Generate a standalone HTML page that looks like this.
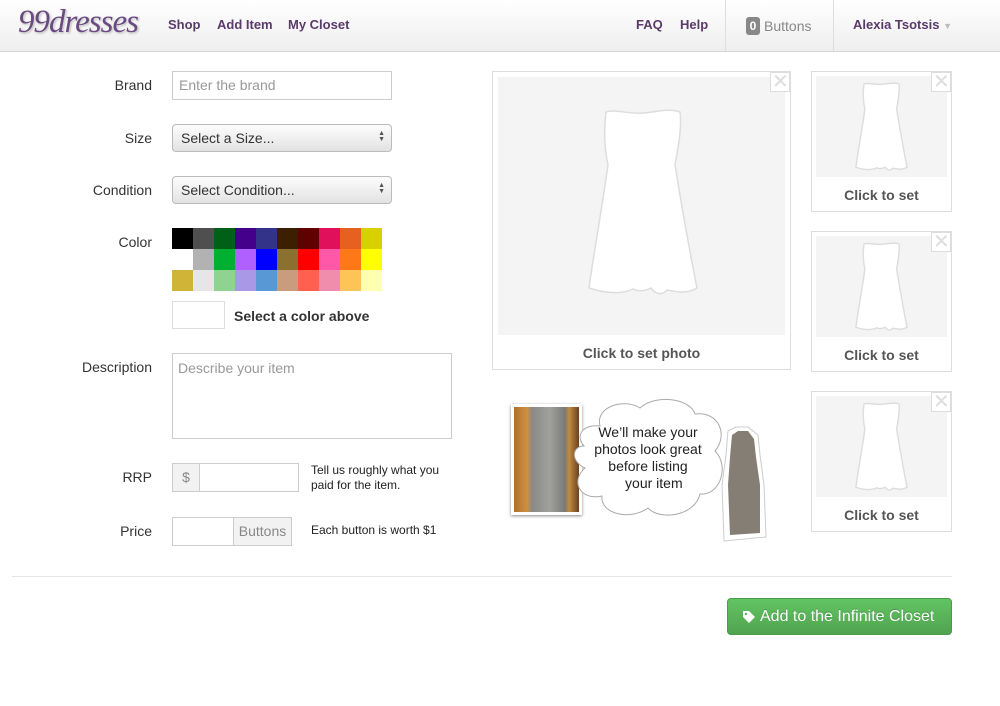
<!DOCTYPE html>
<html><head><meta charset="utf-8"><style>
*{box-sizing:border-box;margin:0;padding:0}
body{width:1000px;height:706px;background:#fff;font-family:"Liberation Sans",Arial,sans-serif;position:relative;overflow:hidden;color:#333}
.a{position:absolute}
.hdr{left:0;top:0;width:1000px;height:52px;background:linear-gradient(#fff,#eee);border-bottom:1px solid #d5d5d5}
.nav{font-size:13px;font-weight:bold;color:#5a3a6a;top:17px}
.lbl{font-size:14px;color:#333;width:152px;text-align:right;left:0}
.inp{border:1px solid #ccc;background:#fff}
.sel{border:1px solid #bbb;border-radius:4px;background:linear-gradient(#fdfdfd,#e2e2e2);font-size:14px;color:#333;padding:5px 8px}
.arr{position:absolute;right:6px;top:6px;font-size:7px;line-height:6px;color:#555}
.sw{width:21px;height:21px;position:absolute}
.box{border:1px solid #ddd;background:#fff}
.gray{background:#f4f4f4}
.cap{font-size:14px;font-weight:bold;color:#555;text-align:center}
.x{width:20px;height:20px;border:1px solid #ddd;background:#fff}
</style></head><body>
<div class="a hdr"></div>
<div class="a" style="left:18px;top:4px;font-family:'Liberation Serif',serif;font-style:italic;font-size:33px;color:#6a4a80;letter-spacing:-1px;text-shadow:0 0 3px #fff,1px 1px 2px #999">99dresses</div>
<div class="a nav" style="left:168px">Shop</div>
<div class="a nav" style="left:217px">Add Item</div>
<div class="a nav" style="left:288px">My Closet</div>
<div class="a nav" style="left:636px">FAQ</div>
<div class="a nav" style="left:680px">Help</div>
<div class="a" style="left:725px;top:0;width:1px;height:51px;background:#ddd"></div>
<div class="a" style="left:833px;top:0;width:1px;height:51px;background:#ddd"></div>
<div class="a" style="left:746px;top:17px;width:14px;height:18px;background:#888;border-radius:3px;color:#fff;font-size:12px;font-weight:bold;text-align:center;line-height:18px">0</div>
<div class="a" style="left:764px;top:18px;font-size:14px;color:#888">Buttons</div>
<div class="a nav" style="left:853px">Alexia Tsotsis <span style="color:#bbb;font-size:9px">▼</span></div>

<div class="a lbl" style="top:77px">Brand</div>
<div class="a inp" style="left:172px;top:71px;width:220px;height:29px;font-size:14px;color:#999;padding:5px 6px">Enter the brand</div>
<div class="a lbl" style="top:130px">Size</div>
<div class="a sel" style="left:172px;top:124px;width:220px;height:28px">Select a Size...<div class="arr">▲<br>▼</div></div>
<div class="a lbl" style="top:182px">Condition</div>
<div class="a sel" style="left:172px;top:176px;width:220px;height:28px">Select Condition...<div class="arr">▲<br>▼</div></div>
<div class="a lbl" style="top:234px">Color</div>
<div class="a" style="left:172px;top:228px;width:210px;height:63px">
<div class="sw" style="left:0;top:0;background:#000"></div><div class="sw" style="left:21px;top:0;background:#4f4f4f"></div><div class="sw" style="left:42px;top:0;background:#006018"></div><div class="sw" style="left:63px;top:0;background:#44008a"></div><div class="sw" style="left:84px;top:0;background:#33338a"></div><div class="sw" style="left:105px;top:0;background:#3c1f00"></div><div class="sw" style="left:126px;top:0;background:#600000"></div><div class="sw" style="left:147px;top:0;background:#e0105a"></div><div class="sw" style="left:168px;top:0;background:#e66020"></div><div class="sw" style="left:189px;top:0;background:#d8d000"></div>
<div class="sw" style="left:0;top:21px;background:#fff"></div><div class="sw" style="left:21px;top:21px;background:#b2b2b2"></div><div class="sw" style="left:42px;top:21px;background:#00b030"></div><div class="sw" style="left:63px;top:21px;background:#b060ff"></div><div class="sw" style="left:84px;top:21px;background:#0000ff"></div><div class="sw" style="left:105px;top:21px;background:#8c7030"></div><div class="sw" style="left:126px;top:21px;background:#ff0000"></div><div class="sw" style="left:147px;top:21px;background:#ff58a8"></div><div class="sw" style="left:168px;top:21px;background:#ff7818"></div><div class="sw" style="left:189px;top:21px;background:#ffff00"></div>
<div class="sw" style="left:0;top:42px;background:#d0b438"></div><div class="sw" style="left:21px;top:42px;background:#e6e6e6"></div><div class="sw" style="left:42px;top:42px;background:#8ed490"></div><div class="sw" style="left:63px;top:42px;background:#a898e6"></div><div class="sw" style="left:84px;top:42px;background:#5898d4"></div><div class="sw" style="left:105px;top:42px;background:#c89c7c"></div><div class="sw" style="left:126px;top:42px;background:#ff6050"></div><div class="sw" style="left:147px;top:42px;background:#f08cac"></div><div class="sw" style="left:168px;top:42px;background:#ffc458"></div><div class="sw" style="left:189px;top:42px;background:#ffffb0"></div>
</div>
<div class="a inp" style="left:172px;top:301px;width:53px;height:28px;border-color:#ddd"></div>
<div class="a" style="left:234px;top:308px;font-size:14px;font-weight:bold;color:#333">Select a color above</div>
<div class="a lbl" style="top:359px">Description</div>
<div class="a inp" style="left:172px;top:353px;width:280px;height:86px;font-size:14px;color:#999;padding:6px 5px">Describe your item</div>
<div class="a lbl" style="top:469px">RRP</div>
<div class="a inp" style="left:172px;top:463px;width:127px;height:29px"></div>
<div class="a" style="left:173px;top:464px;width:27px;height:27px;background:#f2f2f2;border-right:1px solid #ccc;color:#888;font-size:14px;text-align:center;line-height:27px">$</div>
<div class="a" style="left:311px;top:463px;font-size:12px;line-height:15px;color:#222">Tell us roughly what you<br>paid for the item.</div>
<div class="a lbl" style="top:523px">Price</div>
<div class="a inp" style="left:172px;top:517px;width:120px;height:29px"></div>
<div class="a" style="left:233px;top:518px;width:58px;height:27px;background:#f2f2f2;border-left:1px solid #ccc;color:#888;font-size:14px;text-align:center;line-height:27px">Buttons</div>
<div class="a" style="left:311px;top:523px;font-size:12px;color:#222">Each button is worth $1</div>

<svg width="0" height="0" style="position:absolute"><defs><path id="dr" d="M19 4 C28 1 40 6 56 5 C70 4 82 0 93 4 C95 20 91 40 88 57 C95 100 104 150 110 180 C100 186 90 184 80 182 C75 188 68 186 64 180 C56 184 50 183 46 181 C36 186 20 186 2 180 C6 150 15 100 21 57 C17 40 17 20 19 4 Z"/></defs></svg>
<div class="a box" style="left:492px;top:71px;width:299px;height:299px"></div>
<div class="a gray" style="left:498px;top:77px;width:287px;height:258px"></div>
<svg class="a" style="left:585px;top:108px" width="114" height="190" viewBox="-2 0 114 190"><use href="#dr" fill="#fff" stroke="#ddd" stroke-width="1.5"/></svg>
<div class="a x" style="left:770px;top:72px"></div><div class="a" style="left:772px;top:69px;font-size:20px;color:#ddd">✕</div>
<div class="a cap" style="left:492px;top:345px;width:299px">Click to set photo</div>

<div class="a box" style="left:811px;top:71px;width:141px;height:141px"></div><div class="a gray" style="left:816px;top:76px;width:131px;height:101px"></div>
<svg class="a" style="left:854px;top:82px" width="54" height="90" viewBox="-2 0 114 190"><use href="#dr" fill="#fff" stroke="#ddd" stroke-width="3"/></svg>
<div class="a x" style="left:931px;top:72px"></div><div class="a" style="left:933px;top:69px;font-size:20px;color:#ddd">✕</div>
<div class="a cap" style="left:811px;top:187px;width:141px">Click to set</div>
<div class="a box" style="left:811px;top:231px;width:141px;height:141px"></div><div class="a gray" style="left:816px;top:236px;width:131px;height:101px"></div>
<svg class="a" style="left:854px;top:242px" width="54" height="90" viewBox="-2 0 114 190"><use href="#dr" fill="#fff" stroke="#ddd" stroke-width="3"/></svg>
<div class="a x" style="left:931px;top:232px"></div><div class="a" style="left:933px;top:229px;font-size:20px;color:#ddd">✕</div>
<div class="a cap" style="left:811px;top:347px;width:141px">Click to set</div>
<div class="a box" style="left:811px;top:391px;width:141px;height:141px"></div><div class="a gray" style="left:816px;top:396px;width:131px;height:101px"></div>
<svg class="a" style="left:854px;top:402px" width="54" height="90" viewBox="-2 0 114 190"><use href="#dr" fill="#fff" stroke="#ddd" stroke-width="3"/></svg>
<div class="a x" style="left:931px;top:392px"></div><div class="a" style="left:933px;top:389px;font-size:20px;color:#ddd">✕</div>
<div class="a cap" style="left:811px;top:507px;width:141px">Click to set</div>

<div class="a" style="left:511px;top:404px;width:71px;height:111px;background:#fff;box-shadow:0 1px 3px #888;padding:3px"><div style="width:100%;height:100%;background:linear-gradient(90deg,#b07030,#d09040 20%,#8a8a88 28%,#a0a09c 55%,#7a7a78 78%,#c08a40 85%,#6a4020)"></div></div>
<svg class="a" style="left:570px;top:396px" width="160" height="125" viewBox="0 0 160 125"><path d="M30 30 C25 10 55 2 70 12 C85 -2 120 2 125 18 C150 15 158 40 145 55 C160 70 150 100 130 98 C125 120 90 125 78 112 C60 125 30 118 32 100 C10 105 0 85 15 72 C0 65 2 50 14 50 C5 40 12 28 30 30 Z" fill="#fff" stroke="#aaa" stroke-width="1"/></svg>
<div class="a" style="left:594px;top:424px;font-size:14px;line-height:17px;color:#222;text-align:center;width:108px">We’ll make your<br>photos look great<br>before listing<br>&nbsp;&nbsp;&nbsp;your item</div>
<svg class="a" style="left:716px;top:425px" width="54" height="120" viewBox="0 0 54 120"><path d="M12 6 L20 2 L32 2 L42 10 L44 30 L48 60 L50 112 L8 116 L6 60 L10 30 Z" fill="#fff" stroke="#ccc" stroke-width="1"/><path d="M16 10 L22 6 L32 6 L38 14 L40 32 L44 60 L44 108 L14 110 L12 60 L14 32 Z" fill="#857e74"/></svg>

<div class="a" style="left:12px;top:576px;width:940px;height:1px;background:#e5e5e5"></div>
<div class="a" style="left:727px;top:598px;width:225px;height:37px;background:linear-gradient(#62c462,#51a351);border:1px solid #4a9a4a;border-radius:4px;color:#fff;font-size:16px;line-height:35px;text-shadow:0 -1px 0 rgba(0,0,0,.2)">
<svg class="a" style="left:15px;top:12px" width="12" height="12" viewBox="0 0 12 12"><path d="M0 0 H6 L12 6 L6 12 L0 6 Z" fill="#fff"/><circle cx="3" cy="3" r="1.2" fill="#5ab45a"/></svg>
<span class="a" style="left:32px;top:0">Add to the Infinite Closet</span></div>
</body></html>
